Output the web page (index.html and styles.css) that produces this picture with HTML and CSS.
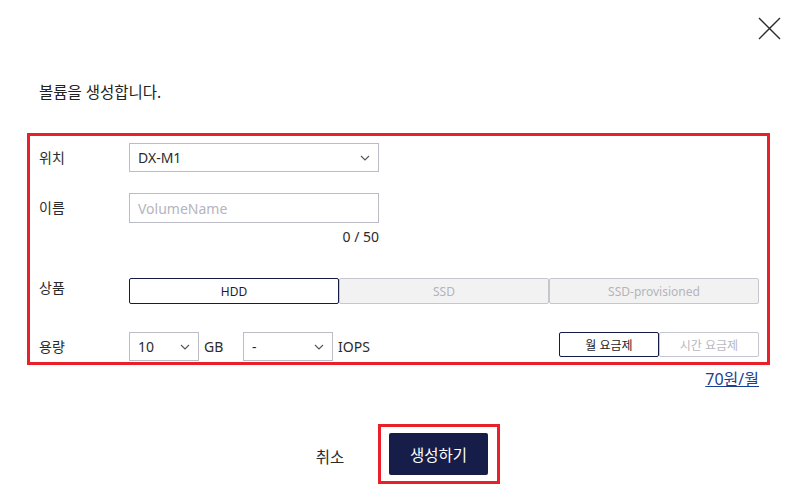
FILE: index.html
```html
<!DOCTYPE html>
<html lang="ko">
<head>
<meta charset="utf-8">
<title>볼륨 생성</title>
<link rel="stylesheet" href="styles.css">
</head>
<body>
<div class="modal">
  <button class="close" aria-label="닫기">
    <svg width="23" height="23" viewBox="0 0 23 23"><path d="M1 1 L22 22 M22 1 L1 22" stroke="#2b2b2b" stroke-width="1.4" fill="none"/></svg>
  </button>
  <h1 class="title">볼륨을 생성합니다.</h1>
  <div class="form">
    <div class="row row-loc">
      <div class="label">위치</div>
      <div class="control">
        <div class="select wide"><span>DX-M1</span><svg class="chev" width="10" height="6" viewBox="0 0 10 6"><path d="M1 1 L5 5 L9 1" stroke="#555" stroke-width="1.1" fill="none"/></svg></div>
      </div>
    </div>
    <div class="row row-name">
      <div class="label name-label">이름</div>
      <div class="control col">
        <div class="input wide"><span class="ph">VolumeName</span></div>
        <div class="counter">0 / 50</div>
      </div>
    </div>
    <div class="row row-prod">
      <div class="label prod-label">상품</div>
      <div class="control seg">
        <div class="segbtn active">HDD</div>
        <div class="segbtn disabled">SSD</div>
        <div class="segbtn disabled">SSD-provisioned</div>
      </div>
    </div>
    <div class="row row-cap">
      <div class="label">용량</div>
      <div class="control cap">
        <div class="select small"><span>10</span><svg class="chev" width="10" height="6" viewBox="0 0 10 6"><path d="M1 1 L5 5 L9 1" stroke="#555" stroke-width="1.1" fill="none"/></svg></div>
        <span class="unit gb">GB</span>
        <div class="select mid"><span>-</span><svg class="chev" width="10" height="6" viewBox="0 0 10 6"><path d="M1 1 L5 5 L9 1" stroke="#555" stroke-width="1.1" fill="none"/></svg></div>
        <span class="unit iops">IOPS</span>
        <div class="billing">
          <div class="billbtn active">월 요금제</div>
          <div class="billbtn">시간 요금제</div>
        </div>
      </div>
    </div>
  </div>
  <div class="price"><a href="#">70원/월</a></div>
  <div class="footer">
    <button class="cancel">취소</button>
    <div class="highlight"><button class="create">생성하기</button></div>
  </div>
</div>
</body>
</html>
```
FILE: styles.css
```css
* { box-sizing: border-box; }
html, body { margin: 0; padding: 0; background: #fff; }
body {
  font-family: "Noto Sans", "Noto Sans CJK KR", sans-serif;
  color: #2b2b2b;
  width: 797px;
  height: 496px;
  overflow: hidden;
}
.modal {
  position: relative;
  width: 797px;
  height: 496px;
  padding: 82px 27px 0 27px;
}
.close {
  position: absolute;
  top: 17px;
  left: 758px;
  width: 23px;
  height: 23px;
  padding: 0;
  border: 0;
  background: none;
  display: block;
}
.close svg { display: block; }
.title {
  margin: 0;
  padding-left: 12px;
  font-size: 15.5px;
  font-weight: 400;
  line-height: 21px;
  color: #222;
}
.form {
  margin-top: 30px;
  border: 3px solid #e8202a;
  padding: 7px 8px 1px 9px;
  display: flex;
  flex-direction: column;
}
.row { display: flex; align-items: flex-start; }
.row-name { margin-top: 21px; }
.row-prod { margin-top: 33px; }
.row-cap { margin-top: 28px; }
.label {
  width: 90px;
  flex: none;
  font-size: 14px;
  line-height: 29px;
  color: #2b2b2b;
}
.name-label { line-height: 29px; }
.prod-label { line-height: 20px; }
.control { flex: 1; display: flex; }
.control.col { flex-direction: column; align-items: flex-start; }
.select, .input {
  height: 29px;
  border: 1px solid #bcbcc6;
  background: #fff;
  display: flex;
  align-items: center;
  justify-content: space-between;
  padding: 0 8px 0 8px;
  font-size: 14px;
  color: #2b2b2b;
}
.input { height: 30px; }
.wide { width: 250px; }
.small { width: 70px; }
.mid { width: 90px; }
.chev { display: block; flex: none; }
.ph { color: #b4b4be; }
.counter {
  width: 250px;
  margin-top: 6px;
  text-align: right;
  font-size: 14px;
  line-height: 16px;
  color: #2b2b2b;
}
.seg { display: flex; }
.segbtn {
  width: 210px;
  height: 26px;
  border: 1px solid #c6c6ce;
  border-radius: 2px;
  font-size: 12px;
  display: flex;
  align-items: center;
  justify-content: center;
}
.segbtn.active { border-color: #141b47; color: #1d1d2b; background: #fff; }
.segbtn.disabled { background: #f2f2f2; color: #b4b4bc; }
.cap { align-items: center; height: 29px; }
.unit { font-size: 14px; color: #2b2b2b; }
.gb { width: 44px; padding-left: 5px; }
.iops { padding-left: 5px; }
.billing { margin-left: auto; display: flex; align-self: flex-start; }
.billbtn {
  width: 100px;
  height: 25px;
  border: 1px solid #c6c6ce;
  border-radius: 2px;
  font-size: 12px;
  display: flex;
  align-items: center;
  justify-content: center;
  color: #b8b8c0;
  background: #fff;
}
.billbtn.active { border-color: #141b47; color: #1d1d2b; }
.price {
  margin-top: 4px;
  padding-right: 11px;
  text-align: right;
  line-height: 20px;
}
.price a {
  font-size: 16px;
  color: #1c3f92;
  text-decoration: underline;
}
.footer {
  margin-top: 35px;
  padding-left: 255px;
  display: flex;
  align-items: center;
}
.cancel {
  width: 96px;
  border: 0;
  background: none;
  padding: 0;
  margin-top: 5px;
  font-family: inherit;
  font-size: 15.5px;
  color: #2b2b2b;
}
.highlight {
  border: 3px solid #e8202a;
  padding: 6px 9px 6px 8px;
}
.create {
  display: block;
  width: 99px;
  height: 42px;
  border: 0;
  border-radius: 2px;
  background: #161d49;
  color: #fff;
  font-family: inherit;
  font-size: 15.5px;
  padding: 0;
}
```
